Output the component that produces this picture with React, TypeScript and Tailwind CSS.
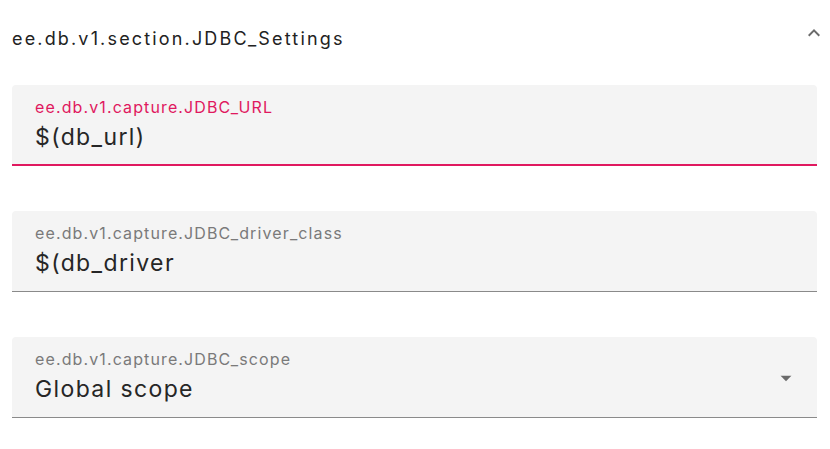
import React from "react";

const font = { fontFamily: "Inter, 'Noto Sans', sans-serif" };

function Field({
  label,
  value,
  focused,
  select,
}: {
  label: string;
  value: string;
  focused?: boolean;
  select?: boolean;
}) {
  return (
    <div
      className={`relative h-[81px] rounded-t-[4px] bg-[#f4f4f4] ${
        focused ? "border-b-2 border-[#e0195f]" : "border-b border-[#8a8a8a]"
      }`}
    >
      <div
        className={`absolute left-[23px] top-[12px] text-[16px] leading-[20px] tracking-[0.07em] ${
          focused ? "text-[#e0195f]" : "text-[#7a7a7a]"
        }`}
      >
        {label}
      </div>
      <div className="absolute left-[23px] top-[37px] text-[23px] leading-[30px] tracking-[0.06em] text-[#262626]">
        {value}
      </div>
      {select && (
        <svg
          className="absolute right-[18px] top-[28px]"
          width="26"
          height="26"
          viewBox="0 0 24 24"
          fill="#6b6b6b"
        >
          <path d="M7 10l5 5 5-5z" />
        </svg>
      )}
    </div>
  );
}

export default function App() {
  return (
    <div className="w-[830px] h-[449px] bg-white" style={font}>
      <div className="relative flex h-[76px] items-center px-[12px]">
        <span className="text-[18px] tracking-[0.12em] text-[#222] pt-[1px]">
          ee.db.v1.section.JDBC_Settings
        </span>
        <svg
          className="absolute left-[802px] top-[21px]"
          width="24"
          height="24"
          viewBox="0 0 24 24"
          fill="#6b6b6b"
        >
          <path d="M12 8l-6 6 1.41 1.41L12 10.83l4.59 4.58L18 14z" />
        </svg>
      </div>
      <div className="mx-[12px] mt-[9px] flex w-[805px] flex-col gap-[45px]">
        <Field label="ee.db.v1.capture.JDBC_URL" value="$(db_url)" focused />
        <Field label="ee.db.v1.capture.JDBC_driver_class" value="$(db_driver" />
        <Field label="ee.db.v1.capture.JDBC_scope" value="Global scope" select />
      </div>
    </div>
  );
}
